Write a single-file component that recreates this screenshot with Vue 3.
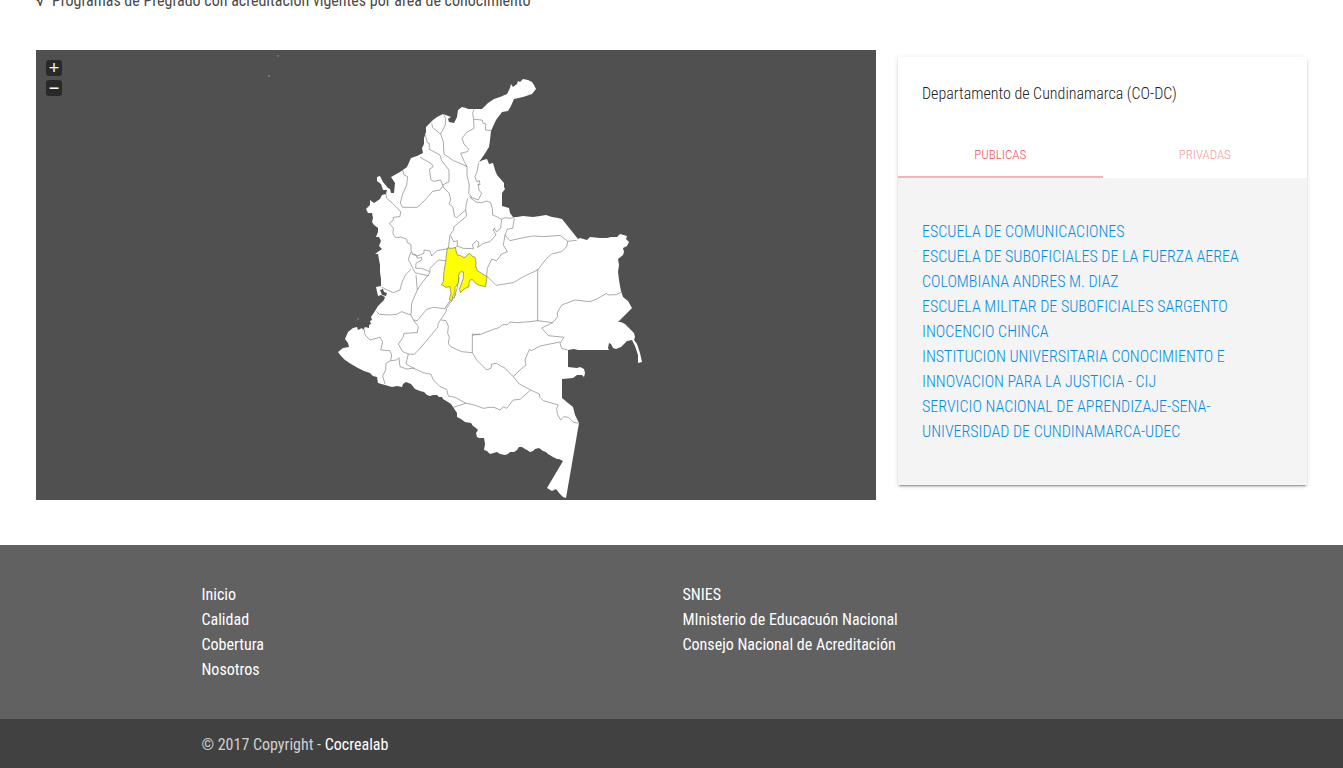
<script setup>
import { ref } from 'vue'

const activeTab = ref('publicas')

const institutions = [
  'ESCUELA DE COMUNICACIONES',
  'ESCUELA DE SUBOFICIALES DE LA FUERZA AEREA COLOMBIANA ANDRES M. DIAZ',
  'ESCUELA MILITAR DE SUBOFICIALES SARGENTO INOCENCIO CHINCA',
  'INSTITUCION UNIVERSITARIA CONOCIMIENTO E INNOVACION PARA LA JUSTICIA - CIJ',
  'SERVICIO NACIONAL DE APRENDIZAJE-SENA-',
  'UNIVERSIDAD DE CUNDINAMARCA-UDEC',
]

const siteLinks = ['Inicio', 'Calidad', 'Cobertura', 'Nosotros']
const externalLinks = ['SNIES', 'MInisterio de Educacuón Nacional', 'Consejo Nacional de Acreditación']

const country =
  'M523 79L528 80 532 82 534 85 536 89 532 94 523 97 514 99 511 106 508 111 502 112 496 120 491 131 490 140 489 147 484 155 479 162 483 160 487 159 489 164 493 163 495 170 497 175 504 183 504 187 505 189 502 193 502 206 509 208 510 213 513 217 517 217 523 216 533 217 540 216 546 215 552 217 558 218 562 219 578 239 580 238 587 240 590 237 600 238 607 238 611 237 617 237 620 234 627 236 626 239 629 242 627 246 623 248 624 252 623 255 618 259 619 265 618 272 619 280 620 286 621 291 623 297 628 301 632 308 618 322 621 322 625 324 634 333 635 337 634 340 637 344 640 353 642 362 638 363 638 355 635 346 632 340 627 341 621 347 616 349 613 348 611 344 609 343 608 348 609 350 578 350 574 349 568 350 568 367 577 368 580 367 584 369 585 373 584 377 582 375 577 375 573 378 562 379 562 398 568 403 573 407 575 415 579 423 566 498 563 497 560 494 556 489 552 491 547 488 563 461 559 459 557 459 553 457 548 454 546 452 543 451 539 448 535 449 533 451 530 452 527 450 525 449 522 447 519 447 517 450 514 452 510 452 508 454 505 455 500 454 497 452 490 454 487 451 484 450 485 444 484 438 479 438 477 437 476 433 478 430 476 428 473 426 471 423 465 422 461 419 457 417 457 413 455 410 453 407 451 404 448 402 443 399 442 397 439 397 437 395 433 395 430 396 427 395 424 392 420 391 415 389 411 384 406 382 403 384 402 387 397 386 392 387 385 385 378 383 377 377 373 376 370 373 364 371 358 368 351 364 345 360 341 356 338 352 343 348 349 347 348 343 345 339 348 332 353 328 357 327 358 330 362 328 363 330 365 327 369 328 369 325 371 324 370 321 372 320 371 317 375 311 378 306 384 300 385 297 381 295 378 296 376 287 381 286 381 279 380 272 380 265 378 254 375 254 382 249 379 246 381 241 379 237 376 237 378 232 378 228 374 225 372 222 373 218 372 213 368 213 366 209 370 205 370 200 374 203 380 199 382 195 386 194 387 190 383 190 381 184 377 181 377 177 380 176 383 182 388 188 390 189 391 193 394 193 395 183 391 177 400 172 407 167 411 158 417 156 423 153 422 148 424 144 424 138 426 132 426 127 431 122 433 120 437 117 443 114 451 117 448 119 449 122 454 123 457 117 458 110 462 107 466 108 468 109 482 109 488 103 494 99 500 97 507 94 510 88 511 84 513 87 517 84 518 81 520 82Z'

/* Department borders, one entry per section of the map sheet. */
const borders = [
  {
    x: 330,
    y: 70,
    d: 'M432 118L428 130 431 148 456 150 460 160 468 162 466 180 484 182M431 148L432 175 410 187 396 205 402 222 416 238 412 245 392 250 403 275 411 290M305 160L308 173 332 192 346 165 347 145 340 133M332 192L340 215 342 252 370 272 390 280 411 290M286 195L292 218 298 220 298 238 330 255 335 272 357 300 357 335 338 345M270 262L303 280 310 290 298 298 303 330 312 334 332 330 340 350M218 300L222 315 233 320 230 345 217 375 211 400 218 412 262 412 285 390 308 364 330 360 338 350M338 350L358 370 362 390 357 402 368 410 374 440 380 443 407 420 409 400 413 385M411 290L411 315 418 345 416 370 425 380M446 278L441 305 435 320 440 335 448 332 450 345 444 342 447 360 455 370 445 390 418 380M420 383L440 397 455 398 470 393 482 398 487 415 488 435M168 372L170 385 190 402 212 425 210 440M407 420L410 438',
  },
  {
    x: 330,
    y: 200,
    d: 'M210 50L190 52 190 60 178 70 190 85 189 102 197 113 213 111 230 118 232 128 243 133 243 150 247 162M410 48L372 80 370 92 360 105 355 145M362 107L371 125 382 122 382 138 400 145 430 146 428 132 440 122 447 128 443 142 460 130 480 125 498 105 490 90 495 83M382 138L376 143M247 162L262 168 282 160 282 150 300 153 305 168 320 152 355 146M243 155L235 178 250 208 255 218 270 222 295 227 300 215 275 205 257 205 258 190 275 180 275 172 262 175 258 165 247 162M300 213L300 205 325 180 345 182M243 208L226 225 215 250 210 270 190 278 155 262M258 225L262 270 275 250 295 225M262 270L245 310 243 345 250 360 262 362 290 328 310 322 345 326 362 298M140 335L148 343 180 345 200 343 215 335 243 345M250 360L265 380 262 398 222 400 219 412 205 432M378 282L350 325 348 335 325 370 323 382 268 448M333 360L348 362 355 378 353 400 358 412 355 430M388 232L380 270 372 295',
  },
  {
    x: 480,
    y: 200,
    d: 'M103 55L98 85 82 88 75 105 90 122 130 113 160 108 190 110 240 106 263 124 290 121M263 124L260 140 245 155 215 162 200 175 173 210 130 230 100 248 48 256 20 228 22 205 35 178 50 182 65 162 82 155 70 135 75 105M173 208V364M0 404L40 388 57 383 68 374 83 374 90 366 110 368 150 365 173 362 218 368 233 350 232 338 245 315 285 300 330 305 350 297 380 280 385 285 410 284 424 276M218 368L185 384 205 407 252 412 240 430 245 445 263 450M38 45L50 50 65 58 75 53 90 55 103 52M65 58L62 85 50 95 42 85',
  },
  {
    x: 330,
    y: 300,
    d: 'M102 85L105 105 120 120 150 112 158 125 152 150 180 152 185 165 182 182 168 190 167 210 158 228 165 252M182 182L200 180 207 173 210 200 230 207 255 204M205 132L218 155 235 162 228 192 255 207 280 218 303 223 310 240 330 260 350 268 355 288 375 292 408 310 370 322M268 148L252 163 235 162M355 130L362 140 395 155 427 158V102L450 104M427 158L440 180 470 210',
  },
  {
    x: 440,
    y: 340,
    d: 'M140 90L153 85 155 72 170 70 185 80 192 82 220 110 238 132 272 150 298 162 300 172 310 182 345 192 355 195 350 205 352 222 362 240 372 230 385 232 400 246 416 250M220 110L240 90 258 75 255 60 268 28 275 32 300 18 360 6M272 150L240 178 220 180 200 205 190 200 180 210 162 202 150 202 130 205 100 194 78 190M120 -18L97 -14',
  },
]
</script>

<template>
  <div class="page">
    <main>
      <p class="note">√&nbsp; Programas de Pregrado con acreditación vigentes por área de conocimiento</p>
      <div class="columns">
        <section class="map" aria-label="Mapa de Colombia">
          <svg class="drawing" viewBox="36 50 840 450" aria-hidden="true">
            <path class="land" :d="country" />
            <path class="speck" d="M278 55v2M269 75v2M358 318v2" />
            <path class="water" d="M380 290l3-1 1 3 3 1-1 3-4-1zM451 115l2 1-1 2z" />
            <g v-for="(part, i) in borders" :key="i" :transform="`translate(${part.x} ${part.y}) scale(0.3333)`">
              <path class="border" :d="part.d" />
            </g>
            <g transform="translate(420 230) scale(0.3333)">
              <path
                class="selected"
                d="M82 54L98 55 106 52 109 66 112 75 122 77 132 83 138 80 147 70 158 79 165 82 168 98 167 108 172 122 188 132 201 140 197 170 175 165 165 158 158 149 150 150 147 160 147 170 132 177 122 188 118 178 130 145 130 126 122 125 116 135 115 160 105 172 105 188 98 198 97 210 93 212 88 208 93 190 90 170 78 172 64 164 70 155 72 125 76 100z"
              />
            </g>
          </svg>
          <div class="zoom">
            <button type="button" aria-label="Acercar">+</button>
            <button type="button" aria-label="Alejar">−</button>
          </div>
        </section>

        <section class="card">
          <h2>Departamento de Cundinamarca (CO-DC)</h2>
          <div class="tabs" role="tablist">
            <button
              type="button"
              role="tab"
              :class="{ active: activeTab === 'publicas' }"
              :aria-selected="activeTab === 'publicas'"
              @click="activeTab = 'publicas'"
            >PUBLICAS</button>
            <button
              type="button"
              role="tab"
              :class="{ active: activeTab === 'privadas' }"
              :aria-selected="activeTab === 'privadas'"
              @click="activeTab = 'privadas'"
            >PRIVADAS</button>
          </div>
          <ul class="list">
            <li v-for="name in institutions" :key="name"><a href="#">{{ name }}</a></li>
          </ul>
        </section>
      </div>
    </main>

    <footer>
      <div class="container links">
        <ul>
          <li v-for="name in siteLinks" :key="name"><a href="#">{{ name }}</a></li>
        </ul>
        <ul>
          <li v-for="name in externalLinks" :key="name"><a href="#">{{ name }}</a></li>
        </ul>
      </div>
      <div class="copyright">
        <div class="container">© 2017 Copyright - <a href="#">Cocrealab</a></div>
      </div>
    </footer>
  </div>
</template>

<style>
body {
  margin: 0;
  background: #fff;
}
</style>

<style scoped>
.page {
  overflow: hidden;
  font-family: 'Roboto Condensed', 'Liberation Sans Narrow', Roboto, sans-serif;
  font-size: 16px;
  line-height: 25px;
  color: #212121;
}

main {
  padding: 0 36px 45px;
}

.note {
  margin: -12px 0 37px;
  color: #4a4a4a;
}

.columns {
  display: grid;
  grid-template-columns: 840fr 409fr;
  gap: 22px;
  align-items: start;
}

.map {
  position: relative;
  background: #505050;
}

.drawing {
  display: block;
  width: 100%;
}

.land {
  fill: #fff;
}

.water {
  fill: #505050;
}

.speck {
  fill: none;
  stroke: #888;
}

.border {
  fill: none;
  stroke: #818181;
  stroke-width: 2;
}

.selected {
  fill: #ff0;
  stroke: #777740;
  stroke-width: 2;
}

.zoom {
  position: absolute;
  top: 10px;
  left: 10px;
  display: grid;
  gap: 4px;
}

.zoom button {
  width: 16px;
  height: 16px;
  padding: 0;
  border: 0;
  border-radius: 3px;
  background: #292929;
  color: #fff;
  font: 400 18px/16px 'Liberation Sans', sans-serif;
}

.card {
  margin-top: 7px;
  border-radius: 2px;
  background: #fff;
  box-shadow: 0 2px 2px 0 rgba(0, 0, 0, 0.14), 0 1px 5px 0 rgba(0, 0, 0, 0.12), 0 3px 1px -2px rgba(0, 0, 0, 0.2);
}

.card h2 {
  margin: 0;
  padding: 24px;
  font-size: 16px;
  font-weight: 300;
  line-height: 25px;
}

.tabs {
  display: grid;
  grid-template-columns: 1fr 1fr;
}

.tabs button {
  height: 48px;
  padding: 2px 0 0;
  border: 0;
  border-bottom: 2px solid transparent;
  background: none;
  color: #f19a9e;
  font-family: inherit;
  font-size: 13px;
  font-weight: 300;
}

.tabs .active {
  border-color: #f6b2b5;
  color: #e8545a;
}

ul {
  margin: 0;
  padding: 0;
  list-style: none;
}

a {
  text-decoration: none;
}

.list {
  padding: 41px 24px;
  background: #f4f4f4;
  font-weight: 300;
}

.list a {
  color: #038ee0;
}

footer {
  background: #616161;
  color: #fff;
}

.container {
  width: 70%;
  margin: 0 auto;
}

.links {
  display: grid;
  grid-template-columns: 1fr 1fr;
  gap: 22px;
  padding: 37px 0;
}

footer a {
  color: #fff;
}

.copyright {
  padding: 13px 0 11px;
  background: #414141;
  color: #d0d0d0;
}
</style>
